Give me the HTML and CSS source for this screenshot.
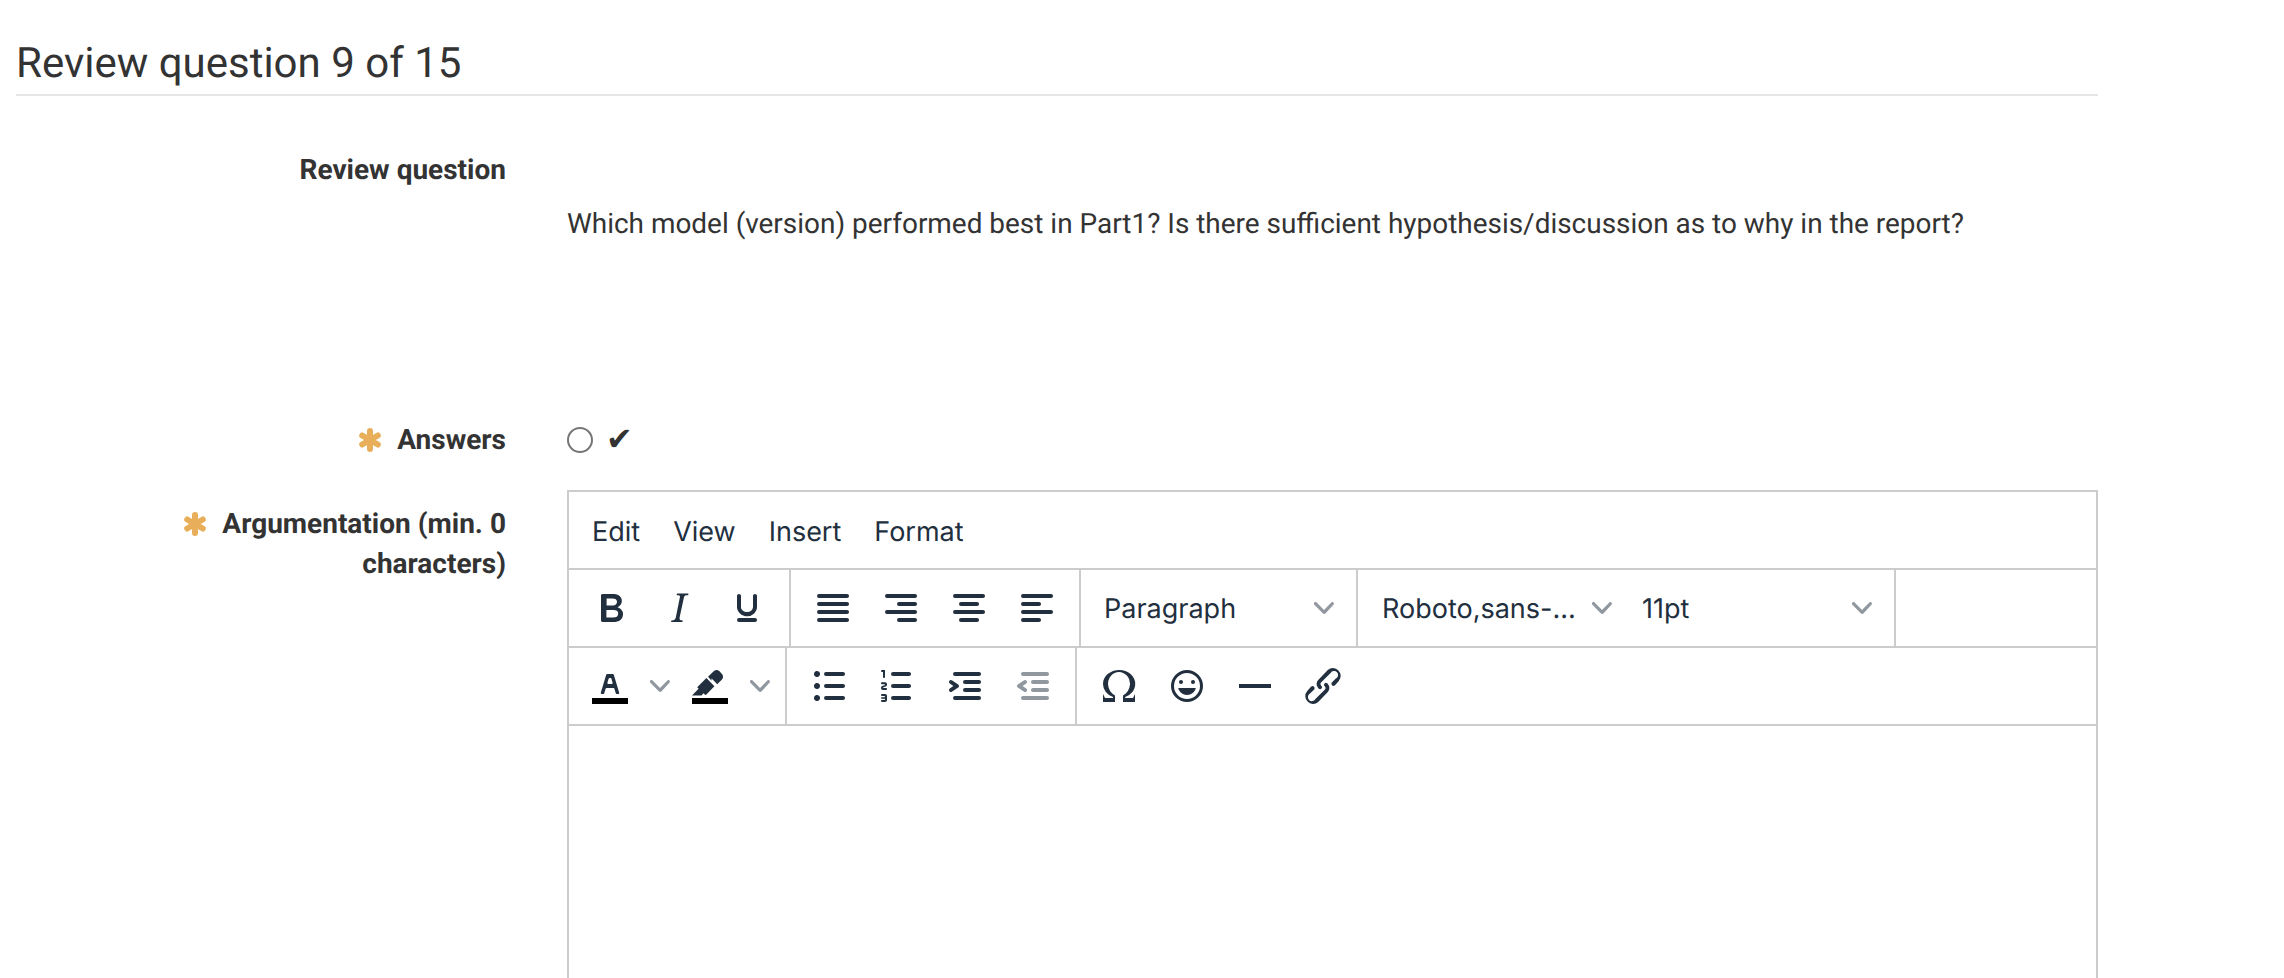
FILE: index.html
```html
<!DOCTYPE html>
<html lang="en">

<head>
    <meta charset="UTF-8">
    <title>Review question 9 of 15</title>
    <link rel="stylesheet" href="styles.css">
</head>

<body>

    <div class="page">
        <h3 class="heading">Review question 9 of 15</h3>

        <div class="row row-question">
            <div class="label">Review question</div>
            <div class="question-text">Which model (version) performed best in Part1? Is there sufficient hypothesis/discussion as to why in the report?</div>
        </div>

        <div class="row row-answers">
            <div class="label">
                <svg class="req" viewBox="0 0 24 24"><path d="M12 3v18M4.200 7.500l15.600 9M19.800 7.500l-15.600 9"/></svg>Answers
            </div>
            <div class="answers">
                <input type="radio" class="radio" name="answer">
                <span class="check">✔</span>
            </div>
        </div>

        <div class="row row-editor">
            <div class="label label-editor">
                <svg class="req" viewBox="0 0 24 24"><path d="M12 3v18M4.200 7.500l15.600 9M19.800 7.500l-15.600 9"/></svg>Argumentation (min. 0 characters)
            </div>
            <div class="editor">
                <div class="menubar">
                    <span>Edit</span>
                    <span>View</span>
                    <span>Insert</span>
                    <span>Format</span>
                </div>

                <div class="toolbar">
                    <div class="group">
                        <span class="btn"><svg viewBox="0 0 24 24"><path d="M7.8 19c-.3 0-.5 0-.6-.2l-.2-.5V5.7c0-.2 0-.4.2-.5l.6-.2h5c1.5 0 2.7.3 3.5 1 .7.6 1.1 1.4 1.1 2.5a3 3 0 0 1-.6 1.9c-.4.6-1 1-1.6 1.2.4.1.9.3 1.3.6s.8.7 1 1.2c.4.4.5 1 .5 1.6 0 1.3-.4 2.3-1.3 3-.8.7-2.1 1-3.8 1H7.8zm5-8.3c.6 0 1.2-.1 1.6-.5.4-.3.6-.7.6-1.3 0-1.1-.8-1.7-2.4-1.7H9.8v3.5h3zm.5 6c.7 0 1.3-.1 1.7-.4.4-.4.6-.9.6-1.5s-.2-1-.7-1.4c-.4-.3-1-.4-2-.4H9.7v3.8h3.6z"/></svg></span>
                        <span class="btn"><svg viewBox="0 0 24 24"><path d="M16.7 4.7l-.1.9h-.3c-.6 0-1 0-1.4.3-.3.3-.4.6-.5 1.1l-2.1 9.8v.6c0 .5.4.8 1.4.8h.2l-.2.8H8l.2-.8h.2c1.1 0 1.8-.5 2-1.5l2-9.8.1-.5c0-.6-.4-.8-1.4-.8h-.3l.2-.9h5.8z"/></svg></span>
                        <span class="btn"><svg viewBox="0 0 24 24"><path d="M16 5c.6 0 1 .4 1 1v5.5a4 4 0 0 1-.4 1.8l-1 1.4a5.3 5.3 0 0 1-5.5 1 5 5 0 0 1-1.6-1c-.5-.4-.8-.9-1.1-1.4a4 4 0 0 1-.4-1.8V6c0-.6.4-1 1-1s1 .4 1 1v5.5c0 .3 0 .6.2 1l.6.7a3.3 3.3 0 0 0 2.2.8 3.4 3.4 0 0 0 2.2-.8c.3-.2.4-.5.6-.8l.2-.9V6c0-.6.4-1 1-1zM8 17h8c.6 0 1 .4 1 1s-.4 1-1 1H8a1 1 0 0 1 0-2z"/></svg></span>
                    </div>
                    <div class="group">
                        <span class="btn"><svg viewBox="0 0 24 24"><path d="M5 5h14c.6 0 1 .4 1 1s-.4 1-1 1H5a1 1 0 1 1 0-2zm0 4h14c.6 0 1 .4 1 1s-.4 1-1 1H5a1 1 0 1 1 0-2zm0 4h14c.6 0 1 .4 1 1s-.4 1-1 1H5a1 1 0 0 1 0-2zm0 4h14c.6 0 1 .4 1 1s-.4 1-1 1H5a1 1 0 0 1 0-2z"/></svg></span>
                        <span class="btn"><svg viewBox="0 0 24 24"><path d="M5 5h14c.6 0 1 .4 1 1s-.4 1-1 1H5a1 1 0 1 1 0-2zm6 4h8c.6 0 1 .4 1 1s-.4 1-1 1h-8a1 1 0 0 1 0-2zm0 8h8c.6 0 1 .4 1 1s-.4 1-1 1h-8a1 1 0 0 1 0-2zm-6-4h14c.6 0 1 .4 1 1s-.4 1-1 1H5a1 1 0 0 1 0-2z"/></svg></span>
                        <span class="btn"><svg viewBox="0 0 24 24"><path d="M5 5h14c.6 0 1 .4 1 1s-.4 1-1 1H5a1 1 0 1 1 0-2zm3 4h8c.6 0 1 .4 1 1s-.4 1-1 1H8a1 1 0 1 1 0-2zm0 8h8c.6 0 1 .4 1 1s-.4 1-1 1H8a1 1 0 0 1 0-2zm-3-4h14c.6 0 1 .4 1 1s-.4 1-1 1H5a1 1 0 0 1 0-2z"/></svg></span>
                        <span class="btn"><svg viewBox="0 0 24 24"><path d="M5 5h14c.6 0 1 .4 1 1s-.4 1-1 1H5a1 1 0 1 1 0-2zm0 4h8c.6 0 1 .4 1 1s-.4 1-1 1H5a1 1 0 1 1 0-2zm0 8h8c.6 0 1 .4 1 1s-.4 1-1 1H5a1 1 0 0 1 0-2zm0-4h14c.6 0 1 .4 1 1s-.4 1-1 1H5a1 1 0 0 1 0-2z"/></svg></span>
                    </div>
                    <div class="group">
                        <span class="select select-block">Paragraph<svg class="chev" viewBox="0 0 10 10"><path d="M8.7 2.2c.3-.3.8-.3 1 0 .4.4.4.9 0 1.2L5.7 7.8c-.3.3-.9.3-1.2 0L.2 3.4a.8.8 0 0 1 0-1.2c.3-.3.8-.3 1.1 0L5 6l3.7-3.8z"/></svg></span>
                    </div>
                    <div class="group">
                        <span class="select">Roboto,sans-...<svg class="chev" viewBox="0 0 10 10"><path d="M8.7 2.2c.3-.3.8-.3 1 0 .4.4.4.9 0 1.2L5.7 7.8c-.3.3-.9.3-1.2 0L.2 3.4a.8.8 0 0 1 0-1.2c.3-.3.8-.3 1.1 0L5 6l3.7-3.8z"/></svg></span>
                        <span class="select">11pt<svg class="chev" viewBox="0 0 10 10"><path d="M8.7 2.2c.3-.3.8-.3 1 0 .4.4.4.9 0 1.2L5.7 7.8c-.3.3-.9.3-1.2 0L.2 3.4a.8.8 0 0 1 0-1.2c.3-.3.8-.3 1.1 0L5 6l3.7-3.8z"/></svg></span>
                    </div>
                </div>

                <div class="toolbar">
                    <div class="group">
                        <span class="btn btn-split"><svg viewBox="0 0 24 24"><path fill="#000" d="M3 18h18v3H3z"/><path d="M8.7 16h-.8a.5.5 0 0 1-.5-.6l2.7-9c.1-.3.3-.4.5-.4h2.8c.2 0 .4.1.5.4l2.7 9a.5.5 0 0 1-.5.6h-.8a.5.5 0 0 1-.4-.4l-.7-2.2c0-.3-.3-.4-.5-.4h-3.4c-.2 0-.4.1-.5.4l-.7 2.2c0 .3-.2.4-.4.4zm2.6-7.6l-.6 2a.5.5 0 0 0 .5.6h1.6a.5.5 0 0 0 .5-.6l-.6-2c0-.3-.3-.4-.5-.4h-.4c-.2 0-.4.1-.5.4z"/></svg></span>
                        <span class="split-chev"><svg class="chev" viewBox="0 0 10 10"><path d="M8.7 2.2c.3-.3.8-.3 1 0 .4.4.4.9 0 1.2L5.7 7.8c-.3.3-.9.3-1.2 0L.2 3.4a.8.8 0 0 1 0-1.2c.3-.3.8-.3 1.1 0L5 6l3.7-3.8z"/></svg></span>
                        <span class="btn btn-split"><svg viewBox="0 0 24 24"><path fill="#000" d="M3 18h18v3H3z"/><path d="M7.7 16.7H3l3.3-3.3-.7-.8L10.2 8l4 4.1-4 4.2c-.2.2-.6.2-.8 0l-.6-.7-1.1 1.1zm5-7.5L11 7.4l3-2.9a2 2 0 0 1 2.6 0L18 6c.7.7.7 2 0 2.7l-2.4 2.4-.8-.8-2-2.1z"/></svg></span>
                        <span class="split-chev"><svg class="chev" viewBox="0 0 10 10"><path d="M8.7 2.2c.3-.3.8-.3 1 0 .4.4.4.9 0 1.2L5.7 7.8c-.3.3-.9.3-1.2 0L.2 3.4a.8.8 0 0 1 0-1.2c.3-.3.8-.3 1.1 0L5 6l3.7-3.8z"/></svg></span>
                    </div>
                    <div class="group">
                        <span class="btn"><svg viewBox="0 0 24 24"><path d="M10.500 5h8.500c.6 0 1 .4 1 1s-.4 1-1 1h-8.500a1 1 0 0 1 0-2zm0 6h8.500c.6 0 1 .4 1 1s-.4 1-1 1h-8.500a1 1 0 0 1 0-2zm0 6h8.500c.6 0 1 .4 1 1s-.4 1-1 1h-8.500a1 1 0 0 1 0-2zM4.500 6c0-.4.1-.8.4-1 .3-.4.7-.5 1.100-.5s.8.1 1 .4c.4.3.5.7.5 1.100s-.1.8-.4 1c-.3.4-.7.5-1.100.5s-.8-.1-1-.4c-.4-.3-.5-.7-.5-1.100zm0 6c0-.4.1-.8.4-1 .3-.4.7-.5 1.100-.5s.8.1 1 .4c.4.3.5.7.5 1.100s-.1.8-.4 1c-.3.4-.7.5-1.100.5s-.8-.1-1-.4c-.4-.3-.5-.7-.5-1.100zm0 6c0-.4.1-.8.4-1 .3-.4.7-.5 1.100-.5s.8.1 1 .4c.4.3.5.7.5 1.100s-.1.8-.4 1c-.3.4-.7.5-1.100.5s-.8-.1-1-.4c-.4-.3-.5-.7-.5-1.100z"/></svg></span>
                        <span class="btn"><svg viewBox="0 0 24 24"><path d="M10 17h8c.6 0 1 .4 1 1s-.4 1-1 1h-8a1 1 0 0 1 0-2zm0-6h8c.6 0 1 .4 1 1s-.4 1-1 1h-8a1 1 0 0 1 0-2zm0-6h8c.6 0 1 .4 1 1s-.4 1-1 1h-8a1 1 0 1 1 0-2zM6 4v3.500c0 .3-.2.5-.5.5a.5.5 0 0 1-.5-.5V5h-.5a.5.5 0 0 1 0-1H6zm-1 8.800l.2.2h1.300c.3 0 .5.2.5.5s-.2.5-.5.5H4.900a1 1 0 0 1-.9-1V13c0-.4.3-.8.6-1l1.200-.4.2-.3a.2.2 0 0 0-.2-.2H4.500a.5.5 0 0 1-.5-.5c0-.3.2-.5.5-.5h1.600c.5 0 .9.4.9 1v.1c0 .4-.3.8-.6 1l-1.200.4-.2.3zM7 17v2c0 .6-.4 1-1 1H4.500a.5.5 0 0 1 0-1h1.200c.2 0 .3-.1.3-.3 0-.2-.1-.3-.3-.3H4.400a.4.4 0 1 1 0-.8h1.300c.2 0 .3-.1.3-.3 0-.2-.1-.3-.3-.3H4.500a.5.5 0 1 1 0-1H6c.6 0 1 .4 1 1z"/></svg></span>
                        <span class="btn"><svg viewBox="0 0 24 24"><path d="M7 5h12c.6 0 1 .4 1 1s-.4 1-1 1H7a1 1 0 1 1 0-2zm5 4h7c.6 0 1 .4 1 1s-.4 1-1 1h-7a1 1 0 0 1 0-2zm0 4h7c.6 0 1 .4 1 1s-.4 1-1 1h-7a1 1 0 0 1 0-2zm-5 4h12a1 1 0 0 1 0 2H7a1 1 0 0 1 0-2zm-2.600-3.800L6.200 12l-1.800-1.200a1 1 0 0 1 1.200-1.600l3 2a1 1 0 0 1 0 1.600l-3 2a1 1 0 1 1-1.200-1.600z"/></svg></span>
                        <span class="btn btn-disabled"><svg viewBox="0 0 24 24"><path d="M7 5h12c.6 0 1 .4 1 1s-.4 1-1 1H7a1 1 0 1 1 0-2zm5 4h7c.6 0 1 .4 1 1s-.4 1-1 1h-7a1 1 0 0 1 0-2zm0 4h7c.6 0 1 .4 1 1s-.4 1-1 1h-7a1 1 0 0 1 0-2zm-5 4h12a1 1 0 0 1 0 2H7a1 1 0 0 1 0-2zm1.600-3.800a1 1 0 0 1-1.200 1.600l-3-2a1 1 0 0 1 0-1.600l3-2a1 1 0 0 1 1.200 1.600L6.800 12l1.800 1.200z"/></svg></span>
                    </div>
                    <div class="group group-last">
                        <span class="btn"><svg viewBox="0 0 24 24"><path d="M15 18h4l1-2v4h-6v-3.300l1.400-1a6 6 0 0 0 1.800-2.900 6.300 6.300 0 0 0-.1-4.100 5.800 5.800 0 0 0-3-3.200c-.6-.3-1.300-.5-2.100-.5a5.100 5.100 0 0 0-3.900 1.800 6.300 6.300 0 0 0-1.300 6 6.200 6.200 0 0 0 1.800 3l1.400.9V20H4v-4l1 2h4v-.5l-2-1L5.400 15A6.500 6.500 0 0 1 4 11c0-1 .2-1.900.6-2.700A7 7 0 0 1 6.300 6C7.100 5.400 8 5 9 4.500c1-.3 2-.5 3.100-.5a8.800 8.800 0 0 1 5.700 2 7 7 0 0 1 1.700 2.300 6 6 0 0 1 .2 4.800c-.2.7-.6 1.300-1 1.900a7.600 7.600 0 0 1-3.600 2.500v.5z"/></svg></span>
                        <span class="btn"><svg viewBox="0 0 24 24"><path d="M9 11c.6 0 1-.4 1-1s-.4-1-1-1a1 1 0 0 0-1 1c0 .6.4 1 1 1zm6 0c.6 0 1-.4 1-1s-.4-1-1-1a1 1 0 0 0-1 1c0 .6.4 1 1 1zm-3 5.500c2.100 0 4-1.500 4.400-3.500H7.600c.5 2 2.300 3.500 4.400 3.500zM12 4a8 8 0 1 0 0 16 8 8 0 0 0 0-16zm0 14.500a6.500 6.500 0 1 1 0-13 6.500 6.500 0 0 1 0 13z"/></svg></span>
                        <span class="btn"><svg viewBox="0 0 24 24"><path d="M4 11h16v2H4z"/></svg></span>
                        <span class="btn"><svg viewBox="0 0 24 24"><path d="M6.200 12.300a1 1 0 0 1 1.400 1.400l-2.100 2.100a2 2 0 1 0 2.700 2.700l4.800-4.800a1 1 0 0 0 0-1.400 1 1 0 1 1 1.400-1.300 2.900 2.900 0 0 1 0 4L9.600 20a3.900 3.900 0 0 1-5.500-5.500l2-2.200zm11.600-.6a1 1 0 0 1-1.400-1.400l2-2a2 2 0 1 0-2.600-2.800L11 10.300a1 1 0 0 0 0 1.400A1 1 0 1 1 9.600 13a2.900 2.900 0 0 1 0-4L14.400 4a3.900 3.900 0 0 1 5.500 5.500l-2 2.200z"/></svg></span>
                    </div>
                </div>

                <div class="edit-area"></div>
            </div>
        </div>
    </div>

</body>

</html>
```
FILE: styles.css
```css
html,
body {
    height: 100%;
    margin: 0;
    overflow: hidden;
    background: #fff;
}

body {
    font-family: Roboto, "Liberation Sans", sans-serif;
    font-size: 28px;
    line-height: 39.2px;
    color: #333;
    text-rendering: geometricPrecision;
}

.page {
    width: 2082px;
    margin-left: 16px;
}

.heading {
    margin: 0;
    padding: 38px 0 5px;
    font-size: 42px;
    font-weight: 400;
    line-height: 51px;
    border-bottom: 2px solid #e5e5e5;
}

.row {
    display: grid;
    grid-template-columns: 490px 1fr;
    column-gap: 61px;
}

.row-question {
    margin-top: 54px;
}

.row-answers {
    margin-top: 177px;
}

.row-editor {
    margin-top: 31px;
}

.label {
    padding-left: 90px;
    font-weight: 700;
    text-align: right;
}

.label-editor {
    padding-top: 14px;
}

.req {
    width: 24px;
    height: 24px;
    margin-right: 15px;
    vertical-align: -3px;
    fill: none;
    stroke: #e8ae5a;
    stroke-width: 6;
    stroke-linecap: round;
}

.question-text {
    padding-top: 54px;
    font-size: 27.94px;
}

.answers {
    display: flex;
    align-items: center;
    gap: 13px;
}

.radio {
    appearance: none;
    box-sizing: border-box;
    width: 26px;
    height: 26px;
    margin: 0;
    border: 2px solid #767676;
    border-radius: 50%;
    background: #fff;
}

.check {
    font-family: "DejaVu Sans", sans-serif;
    font-size: 32px;
    font-weight: 700;
    color: #333;
}

/* editor */
.editor {
    height: 700px;
    border: 2px solid #ccc;
    font-family: Inter, Roboto, sans-serif;
    font-size: 27px;
    color: #222f3e;
}

.menubar {
    display: flex;
    align-items: center;
    gap: 33px;
    box-sizing: border-box;
    height: 76px;
    padding: 2px 0 0 23px;
}

.toolbar {
    display: flex;
    height: 76px;
    border-top: 2px solid #ccc;
}

.group {
    display: flex;
    align-items: center;
    padding: 0 8px;
    border-right: 2px solid #ccc;
}

.group-last {
    border-right: 0;
}

.btn {
    display: flex;
    justify-content: center;
    width: 68px;
}

.btn svg {
    width: 48px;
    height: 48px;
    fill: #222f3e;
}

.btn-split {
    width: 66px;
}

.btn-disabled svg {
    fill: rgba(34, 47, 62, 0.5);
}

.split-chev {
    display: flex;
    justify-content: center;
    width: 34px;
}

.chev {
    width: 20px;
    height: 20px;
    fill: rgba(34, 47, 62, 0.5);
}

.select {
    display: flex;
    align-items: center;
    justify-content: space-between;
    box-sizing: border-box;
    width: 260px;
    padding: 0 14px 0 16px;
}

.select-block {
    width: 259px;
    padding-left: 15px;
}

.edit-area {
    border-top: 2px solid #ccc;
}
```
